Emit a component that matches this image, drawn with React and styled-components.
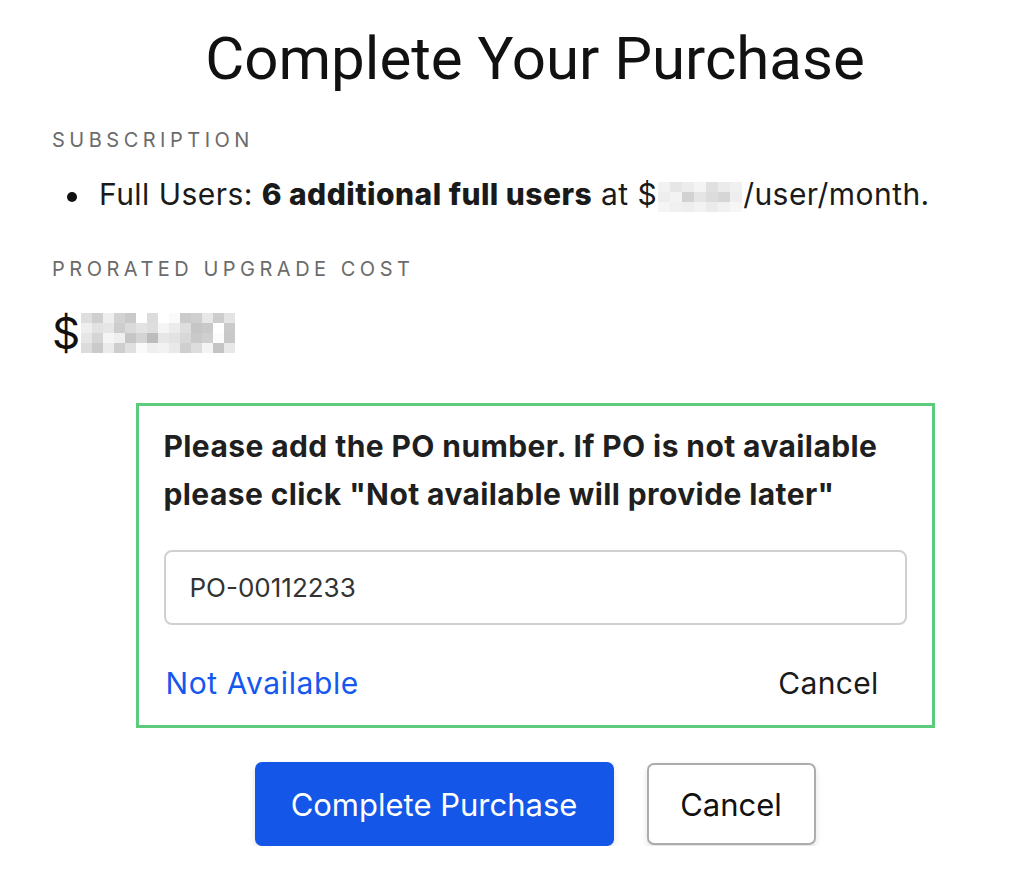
import React from "react";
import styled, { createGlobalStyle } from "styled-components";

const GlobalStyle = createGlobalStyle`
  html, body { margin: 0; padding: 0; background: #fff; }
  body { font-family: Inter, "Noto Sans", Arial, sans-serif; color: #1a1a1a; }
  * { box-sizing: border-box; }
`;

const Page = styled.div`
  width: 966px;
  margin-left: 52px;
  padding-top: 23px;
  display: flex;
  flex-direction: column;
`;

const Title = styled.h1`
  margin: 0;
  text-align: center;
  font-family: Roboto, "Liberation Sans", Arial, sans-serif;
  font-size: 60px;
  font-weight: 400;
  line-height: 72px;
  color: #111;
`;

const SectionLabel = styled.div`
  font-size: 20px;
  letter-spacing: 4.5px;
  color: #6b6b6b;
  text-transform: uppercase;
  margin-top: ${(p) => p.$mt}px;
  line-height: 24px;
`;

const List = styled.ul`
  margin: 22px 0 0 0;
  padding: 0;
  list-style: none;
  font-size: 30px;
  line-height: 40px;
  letter-spacing: 0.45px;
  color: #1a1a1a;
`;

const Item = styled.li`
  &::before {
    content: "";
    display: inline-block;
    width: 10px;
    height: 10px;
    border-radius: 50%;
    background: #111;
    margin: 0 22px 0 15px;
    vertical-align: middle;
  }
`;

const Bold = styled.strong`
  font-weight: 800;
`;

const Mosaic = styled.span`
  display: inline-grid;
  grid-template-columns: repeat(${(p) => p.$cols}, ${(p) => p.$cw}px);
  grid-auto-rows: ${(p) => p.$ch}px;
  vertical-align: middle;
  margin: 0 ${(p) => p.$mx}px;
`;

const Cell = styled.span`
  background: ${(p) => p.$c};
`;

const Price = styled.div`
  margin-top: 26px;
  display: flex;
  align-items: center;
  font-size: 44px;
  line-height: 52px;
  color: #111;
`;

const POBox = styled.div`
  margin: 44px auto 0;
  width: 799px;
  border: 3px solid #5ccb7c;
  padding: 16px 25px 24px 25px;
  display: flex;
  flex-direction: column;
`;

const POText = styled.p`
  margin: 0;
  font-size: 30px;
  font-weight: 700;
  line-height: 48px;
  letter-spacing: 0.4px;
  color: #1f1f1f;
`;

const POInput = styled.input`
  margin-top: 32px;
  width: 100%;
  height: 75px;
  border: 2px solid #d0d0d0;
  border-radius: 8px;
  padding: 0 24px;
  font-family: Inter, "Noto Sans", Arial, sans-serif;
  font-size: 26px;
  color: #333;
  outline: none;
`;

const POActions = styled.div`
  margin-top: 40px;
  display: flex;
  justify-content: space-between;
  align-items: center;
  padding-right: 28px;
`;

const TextButton = styled.button`
  background: none;
  border: none;
  padding: 0 0 0 2px;
  font-family: Inter, "Noto Sans", Arial, sans-serif;
  font-size: 30px;
  line-height: 36px;
  letter-spacing: ${(p) => (p.$link ? "0.6px" : "0.3px")};
  color: ${(p) => (p.$link ? "#1558f0" : "#1a1a1a")};
  cursor: pointer;
`;

const ButtonRow = styled.div`
  margin-top: 34px;
  display: flex;
  justify-content: center;
  align-items: flex-start;
  gap: 33px;
`;

const PrimaryButton = styled.button`
  height: 84px;
  width: 359px;
  border: none;
  border-radius: 7px;
  background: #1356e8;
  color: #fff;
  font-family: Inter, "Noto Sans", Arial, sans-serif;
  font-size: 31px;
  box-shadow: 0 3px 6px rgba(0, 0, 0, 0.12);
  cursor: pointer;
`;

const SecondaryButton = styled.button`
  margin-top: 1px;
  height: 82px;
  width: 169px;
  border: 2px solid #acacac;
  border-radius: 7px;
  background: #fff;
  color: #111;
  font-family: Inter, "Noto Sans", Arial, sans-serif;
  font-size: 31px;
  box-shadow: 0 3px 6px rgba(0, 0, 0, 0.12);
  cursor: pointer;
`;

const perUser = [
  ["#f2f2f2", "#e6e6e6", "#ececec", "#f4f4f4", "#e0e0e0", "#ebebeb", "#f0f0f0"],
  ["#ededed", "#f3f3f3", "#d2d2d2", "#e5e5e5", "#dcdcdc", "#d6d6d6", "#eeeeee"],
  ["#f5f5f5", "#f0f0f0", "#eeeeee", "#f2f2f2", "#ebebeb", "#f1f1f1", "#f6f6f6"],
];

const total = [
  ["#dedede", "#cfcfcf", "#efefef", "#d2d2d2", "#c9c9c9", "#ffffff", "#dcdcdc", "#ffffff", "#fafafa", "#cbcbcb", "#cfcfcf", "#e8e8e8", "#cdcdcd", "#e4e4e4"],
  ["#eeeeee", "#e2e2e2", "#e6e6e6", "#cdcdcd", "#dadada", "#e3e3e3", "#dedede", "#f5f5f5", "#ececec", "#dedede", "#c6c6c6", "#c9c9c9", "#ffffff", "#cacaca"],
  ["#e6e6e6", "#d5d5d5", "#f5f5f5", "#efefef", "#c6c6c6", "#d4d4d4", "#bcbcbc", "#e6e6e6", "#e3e3e3", "#d8d8d8", "#c9c9c9", "#cfcfcf", "#fcfcfc", "#c8c8c8"],
  ["#dcdcdc", "#cacaca", "#ebebeb", "#cecece", "#e0e0e0", "#fafafa", "#efefef", "#f2f2f2", "#e9e9e9", "#cfcfcf", "#dddddd", "#f4f4f4", "#c4c4c4", "#e8e8e8"],
];

function Redacted({ data, cw, ch, mx = 0 }) {
  return (
    <Mosaic $cols={data[0].length} $cw={cw} $ch={ch} $mx={mx} aria-label="redacted">
      {data.flat().map((c, i) => (
        <Cell key={i} $c={c} />
      ))}
    </Mosaic>
  );
}

export default function App() {
  return (
    <>
      <GlobalStyle />
      <Page>
        <Title>Complete Your Purchase</Title>
        <SectionLabel $mt={33}>Subscription</SectionLabel>
        <List>
          <Item>
            Full Users: <Bold>6 additional full users</Bold> at $
            <Redacted data={perUser} cw={12} ch={10} mx={1} />
            /user/month.
          </Item>
        </List>
        <SectionLabel $mt={43}>Prorated Upgrade Cost</SectionLabel>
        <Price>
          $
          <Redacted data={total} cw={11} ch={10} mx={1} />
        </Price>
        <POBox>
          <POText>
            Please add the PO number. If PO is not available please click "Not available will provide later"
          </POText>
          <POInput defaultValue="PO-00112233" />
          <POActions>
            <TextButton $link>Not Available</TextButton>
            <TextButton>Cancel</TextButton>
          </POActions>
        </POBox>
        <ButtonRow>
          <PrimaryButton>Complete Purchase</PrimaryButton>
          <SecondaryButton>Cancel</SecondaryButton>
        </ButtonRow>
      </Page>
    </>
  );
}
